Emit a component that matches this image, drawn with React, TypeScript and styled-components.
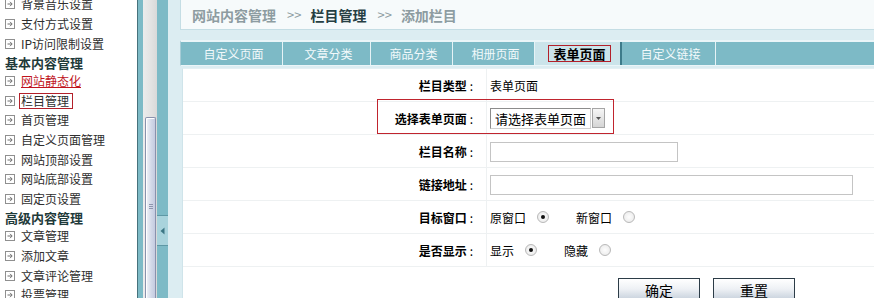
import React from "react";
import styled, { createGlobalStyle } from "styled-components";

const GlobalStyle = createGlobalStyle`
  html, body { margin: 0; padding: 0; background: #fff; overflow: hidden; }
  body {
    font-family: "Noto Sans CJK SC", "Noto Sans", sans-serif;
    font-size: 12px;
    color: #000;
  }
  * { box-sizing: border-box; }
`;

const Frame = styled.div`
  display: flex;
  width: 874px;
  height: 298px;
  overflow: hidden;
`;

/* ---------- left menu ---------- */
const Sidebar = styled.nav`
  width: 138px;
  flex: none;
  background: #fff;
  border-right: 1px solid #46727c;
  overflow: hidden;
`;

const MenuList = styled.ul`
  list-style: none;
  margin: -5.5px 0 0;
  padding: 0;
  display: flex;
  flex-direction: column;
`;

const MenuHeader = styled.li`
  height: 17.5px;
  line-height: 17.5px;
  padding-left: 5px;
  font-size: 13px;
  font-weight: bold;
  color: #1f3a3a;
  white-space: nowrap;
`;

const MenuItem = styled.li`
  height: 19.7px;
  display: flex;
  align-items: center;
  gap: 6px;
  padding-left: 5px;
  font-size: 12px;
  color: #333;
  white-space: nowrap;
`;

const MenuLink = styled.span<{ $hot?: boolean; $boxed?: boolean }>`
  color: ${(p) => (p.$hot ? "#c0141e" : "#2e2e2e")};
  text-decoration: ${(p) => (p.$hot ? "underline" : "none")};
  line-height: 14px;
  ${(p) =>
    p.$boxed
      ? `border: 1px solid #b3202a; padding: 0 3px 0 1px; margin-left: -2px;`
      : ""}
`;

const ItemIcon = () => (
  <svg width="10" height="10" viewBox="0 0 10 10" style={{ flex: "none" }}>
    <rect x="0.5" y="0.5" width="9" height="9" fill="#fff" stroke="#8f8f8f" />
    <path d="M2.5 5 H7" stroke="#6f6f6f" strokeWidth="1" />
    <path d="M5 2.8 L7.2 5 L5 7.2" fill="none" stroke="#6f6f6f" strokeWidth="1" />
  </svg>
);

/* ---------- splitter / scrollbar ---------- */
const Gutter = styled.div`
  width: 30px;
  flex: none;
  display: flex;
  padding-left: 5px;
  background: #7dbac6;
`;

const Track = styled.div`
  width: 14px;
  display: flex;
  flex-direction: column;
  padding: 117px 1px 0 2px;
  background: linear-gradient(to right, #ececec, #e2e2e2 60%, #d9d9d9);
`;

const Thumb = styled.div`
  flex: 1;
  border: 1px solid #8991ad;
  border-bottom: none;
  border-radius: 2px 2px 0 0;
  background: linear-gradient(to right, #f2f4f9, #d2d8e8 60%, #c4cbe0);
  box-shadow: inset 1px 1px 0 #fff;
  display: flex;
  justify-content: center;
  padding-top: 86px;
`;

const Grip = styled.div`
  width: 4px;
  height: 6px;
  background: repeating-linear-gradient(
    to bottom,
    #8d95ae 0,
    #8d95ae 1px,
    transparent 1px,
    transparent 2px
  );
`;

const Strip = styled.div`
  width: 11px;
  display: flex;
  flex-direction: column;
  padding-top: 215px;
`;

const Toggle = styled.div`
  height: 31px;
  background: #a9d3dc;
  border-top: 1px solid #5e98a5;
  border-bottom: 1px solid #5e98a5;
  display: flex;
  align-items: center;
  justify-content: center;
`;

/* ---------- main area ---------- */
const Main = styled.main`
  flex: 1;
  min-width: 0;
  background: #dcedf2;
  padding-left: 12px;
  display: flex;
  flex-direction: column;
`;

const Crumbs = styled.div`
  height: 30px;
  flex: none;
  background: #f6fafb;
  border-left: 1px solid #c4dde4;
  border-bottom: 1px solid #c4dde4;
  padding-left: 11px;
  display: flex;
  align-items: center;
  font-size: 14px;
  white-space: nowrap;
`;

const Crumb = styled.span<{ $current?: boolean }>`
  font-weight: bold;
  color: ${(p) => (p.$current ? "#263f43" : "#8d9ca1")};
`;

const CrumbSep = styled.span`
  color: #8d9ca1;
  margin: 0 9px 0 11px;
  font-size: 13px;
`;

const TabBar = styled.div`
  margin-top: 10px;
  height: 26px;
  flex: none;
  display: flex;
  background: #7dbac6;
  border-top: 2px solid #eaf5f8;
  border-bottom: 1px solid #eaf5f8;
  border-left: 1px solid #a6ccd6;
`;

const Tab = styled.div<{ $w: number; $active?: boolean }>`
  width: ${(p) => p.$w}px;
  flex: none;
  display: flex;
  align-items: center;
  justify-content: center;
  padding-left: 4px;
  color: ${(p) => (p.$active ? "#000" : "#f2f9fb")};
  font-weight: ${(p) => (p.$active ? "bold" : "normal")};
  font-size: ${(p) => (p.$active ? "13px" : "12px")};
  background: ${(p) => (p.$active ? "#cbe4ea" : "transparent")};
  border-right: ${(p) => (p.$active ? "2px solid #3d7b8a" : "1px solid #e6f3f6")};
  white-space: nowrap;
`;

const TabMark = styled.span`
  border: 1px solid #b3202a;
  padding: 0 4px;
  line-height: 15px;
`;

const Panel = styled.section`
  margin: 2px 0 0 2px;
  flex: 1;
  background: #fff;
  border-left: 1px solid #cfe4ea;
  border-top: 1px solid #e4f0f3;
  display: flex;
  flex-direction: column;
`;

const Row = styled.div`
  position: relative;
  display: grid;
  grid-template-columns: 304px 1fr;
  height: 33px;
  flex: none;
  border-bottom: 1px solid #eef1f2;
`;

const Label = styled.div`
  border-right: 1px solid #eef1f2;
  display: flex;
  align-items: center;
  justify-content: flex-end;
  padding-right: 13px;
  font-weight: bold;
  font-size: 12px;
  &::after {
    content: ":";
    margin-left: 3px;
    font-weight: normal;
  }
`;

const Value = styled.div`
  display: flex;
  align-items: center;
  padding-left: 3px;
  font-size: 12px;
`;

const Highlight = styled.div`
  position: absolute;
  left: 194px;
  top: -3px;
  width: 237px;
  height: 35px;
  border: 1px solid #c0242e;
  pointer-events: none;
`;

const Select = styled.div`
  display: flex;
  height: 21px;
  gap: 1px;
  margin-top: 1px;
`;

const SelectText = styled.div`
  width: 101px;
  height: 21px;
  border: 1px solid;
  border-color: #8c8c8c #d0d0d0 #d0d0d0 #8c8c8c;
  font-size: 13px;
  line-height: 19px;
  padding-left: 4px;
  white-space: nowrap;
  background: #fff;
`;

const SelectButton = styled.div`
  width: 13px;
  height: 20px;
  border: 1px solid #a5a5a5;
  background: linear-gradient(#f6f6f6, #d5d5d5);
  display: flex;
  align-items: center;
  justify-content: center;
`;

const TextInput = styled.input<{ $w: number }>`
  width: ${(p) => p.$w}px;
  height: 20px;
  margin-top: 2px;
  border: 1px solid #c4c4c4;
  background: #fff;
  padding: 0 3px;
  font-size: 12px;
  outline: none;
`;

const Choice = styled.span`
  margin-right: 11px;
`;

const Radio = styled.span<{ $on?: boolean; $gap?: number }>`
  width: 12px;
  height: 12px;
  flex: none;
  border-radius: 50%;
  border: 1px solid #b9b9b9;
  background: radial-gradient(circle at 50% 50%, #fdfdfd 0, #f0f0f0 60%, #dedede 100%);
  margin-right: ${(p) => p.$gap ?? 0}px;
  display: flex;
  align-items: center;
  justify-content: center;
  &::after {
    content: "";
    width: 4px;
    height: 4px;
    border-radius: 50%;
    background: ${(p) => (p.$on ? "#111" : "transparent")};
  }
`;

const ButtonRow = styled.div`
  display: flex;
  gap: 13px;
  padding: 11px 0 0 435px;
`;

const Button = styled.button`
  width: 82px;
  height: 24px;
  flex: none;
  border: 1px solid #2c3c47;
  background: linear-gradient(to bottom, #ffffff 0%, #eef1f5 45%, #c2cdd9 100%);
  font-family: "Noto Sans CJK SC", sans-serif;
  font-size: 14px;
  color: #000;
  padding: 0;
  line-height: 20px;
`;

const menu: Array<{ t: string; header?: boolean; hot?: boolean; boxed?: boolean }> = [
  { t: "背景音乐设置" },
  { t: "支付方式设置" },
  { t: "IP访问限制设置" },
  { t: "基本内容管理", header: true },
  { t: "网站静态化", hot: true },
  { t: "栏目管理", boxed: true },
  { t: "首页管理" },
  { t: "自定义页面管理" },
  { t: "网站顶部设置" },
  { t: "网站底部设置" },
  { t: "固定页设置" },
  { t: "高级内容管理", header: true },
  { t: "文章管理" },
  { t: "添加文章" },
  { t: "文章评论管理" },
  { t: "投票管理" },
];

const tabs = [
  { t: "自定义页面", w: 102 },
  { t: "文章分类", w: 88 },
  { t: "商品分类", w: 82 },
  { t: "相册页面", w: 82 },
  { t: "表单页面", w: 87, active: true },
  { t: "自定义链接", w: 94 },
];

export default function App() {
  return (
    <>
      <GlobalStyle />
      <Frame>
        <Sidebar>
          <MenuList>
            {menu.map((m) =>
              m.header ? (
                <MenuHeader key={m.t}>{m.t}</MenuHeader>
              ) : (
                <MenuItem key={m.t}>
                  <ItemIcon />
                  <MenuLink $hot={m.hot} $boxed={m.boxed}>
                    {m.t}
                  </MenuLink>
                </MenuItem>
              )
            )}
          </MenuList>
        </Sidebar>

        <Gutter>
          <Track>
            <Thumb>
              <Grip />
            </Thumb>
          </Track>
          <Strip>
            <Toggle>
              <svg width="5" height="8" viewBox="0 0 5 8">
                <path d="M4.5 0.5 L0.5 4 L4.5 7.5 Z" fill="#3c7684" />
              </svg>
            </Toggle>
          </Strip>
        </Gutter>

        <Main>
          <Crumbs>
            <Crumb>网站内容管理</Crumb>
            <CrumbSep>&gt;&gt;</CrumbSep>
            <Crumb $current>栏目管理</Crumb>
            <CrumbSep>&gt;&gt;</CrumbSep>
            <Crumb>添加栏目</Crumb>
          </Crumbs>

          <TabBar>
            {tabs.map((tb) => (
              <Tab key={tb.t} $w={tb.w} $active={tb.active}>
                {tb.active ? <TabMark>{tb.t}</TabMark> : tb.t}
              </Tab>
            ))}
          </TabBar>

          <Panel>
            <Row>
              <Label>栏目类型</Label>
              <Value>表单页面</Value>
            </Row>
            <Row>
              <Label>选择表单页面</Label>
              <Value>
                <Select>
                  <SelectText>请选择表单页面</SelectText>
                  <SelectButton>
                    <svg width="5" height="3" viewBox="0 0 5 3">
                      <path d="M0 0 H5 L2.5 3 Z" fill="#555" />
                    </svg>
                  </SelectButton>
                </Select>
              </Value>
              <Highlight />
            </Row>
            <Row>
              <Label>栏目名称</Label>
              <Value>
                <TextInput $w={188} />
              </Value>
            </Row>
            <Row>
              <Label>链接地址</Label>
              <Value>
                <TextInput $w={363} />
              </Value>
            </Row>
            <Row>
              <Label>目标窗口</Label>
              <Value>
                <Choice>原窗口</Choice>
                <Radio $on $gap={27} />
                <Choice>新窗口</Choice>
                <Radio />
              </Value>
            </Row>
            <Row>
              <Label>是否显示</Label>
              <Value>
                <Choice>显示</Choice>
                <Radio $on $gap={27} />
                <Choice>隐藏</Choice>
                <Radio />
              </Value>
            </Row>
            <ButtonRow>
              <Button type="button">确定</Button>
              <Button type="button">重置</Button>
            </ButtonRow>
          </Panel>
        </Main>
      </Frame>
    </>
  );
}
